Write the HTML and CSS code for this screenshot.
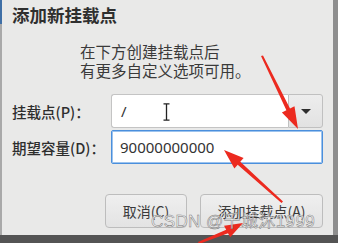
FILE: index.html
```html
<!DOCTYPE html>
<html lang="zh">
<head>
<meta charset="utf-8">
<link rel="stylesheet" href="styles.css">
</head>
<body>
<div class="screen">
  <div class="top">
    <div class="dialog">
      <div class="title">添加新挂载点</div>
      <div class="desc">
        <div>在下方创建挂载点后</div>
        <div>有更多自定义选项可用。</div>
      </div>
      <div class="form">
        <div class="label">挂载点(P)：</div>
        <div class="combo">
          <div class="combo-input">/
            <svg class="ibeam" width="7" height="18" viewBox="0 0 7 18"><path d="M0.5 0.8h6M3.5 0.8v16.4M0.5 17.2h6" stroke="#222" stroke-width="1.3" fill="none"/></svg>
          </div>
          <div class="combo-btn"><span class="tri"></span></div>
        </div>
        <div class="label">期望容量(D)：</div>
        <div class="entry">90000000000</div>
      </div>
      <div class="buttons">
        <div class="btn btn-cancel">取消(C)</div>
        <div class="btn btn-add">添加挂载点(A)</div>
      </div>
    </div>
    <div class="side"></div>
  </div>
  <div class="bottom"></div>
  <svg class="arrows" width="338" height="243" viewBox="0 0 338 243">
    <polygon fill="#ec2a1f" points="261,56 286.4,110.2 281.9,112.4 298,129 294.5,106.2 290,108.4 263,55.5"/>
    <polygon fill="#ec2a1f" points="283,201.5 240.3,161.7 243.6,157.9 224,150 234.4,168.5 237.7,164.7 281.5,203"/>
    <polygon fill="#ec2a1f" points="199,244 228,233.3 230.2,237.2 243,223 224,225.8 226.2,229.7 198,242"/>
  </svg>
  <div class="watermark">CSDN @千城沐1999</div>
</div>
</body>
</html>
```

FILE: styles.css
```css
* { box-sizing: border-box; }
html, body { margin: 0; padding: 0; }
body {
  width: 338px;
  height: 243px;
  overflow: hidden;
  font-family: "Noto Sans CJK SC", "Noto Sans", sans-serif;
  color: #333;
}
.screen {
  position: relative;
  width: 338px;
  height: 243px;
  display: flex;
  flex-direction: column;
  background: #555;
}
.top {
  display: flex;
  height: 235px;
}
.dialog {
  width: 333px;
  background: #e9e9e8;
  border-left: 2px solid #a9a9a9;
  padding: 5px 10px 0 10px;
  display: flex;
  flex-direction: column;
  position: relative;
}
.dialog::before {
  content: "";
  position: absolute;
  left: -2px;
  top: 0;
  width: 2px;
  height: 24px;
  background: #3f6fa6;
}
.side {
  flex: 1;
  background: #8e8e8e;
}
.bottom {
  height: 8px;
  background: #545454;
}
.title {
  font-size: 17.5px;
  line-height: 20px;
  font-weight: 700;
  color: #2f2f2f;
}
.desc {
  margin-top: 17px;
  margin-left: 68px;
  font-size: 15.5px;
  line-height: 19px;
  color: #3a3a3a;
}
.form {
  margin-top: 14px;
  display: grid;
  grid-template-columns: 99px 1fr;
  grid-auto-rows: 34px;
  row-gap: 2px;
  align-items: center;
}
.label {
  font-size: 14.5px;
  font-weight: 500;
  color: #2e2e2e;
  white-space: nowrap;
}
.combo {
  display: flex;
  height: 34px;
}
.combo-input {
  position: relative;
  width: 177px;
  background: #fff;
  border: 1px solid #c4c4c4;
  border-right: none;
  border-radius: 3px 0 0 3px;
  padding-left: 9px;
  font-family: "Noto Sans", sans-serif;
  font-size: 15px;
  line-height: 32px;
  color: #333;
}
.ibeam {
  position: absolute;
  left: 51px;
  top: 8px;
}
.combo-btn {
  flex: 1;
  display: flex;
  align-items: center;
  justify-content: center;
  background: linear-gradient(#ededed, #e2e2e2);
  border: 1px solid #c0c0c0;
  border-radius: 0 3px 3px 0;
}
.tri {
  width: 0;
  height: 0;
  border-left: 5px solid transparent;
  border-right: 5px solid transparent;
  border-top: 5px solid #2e2e2e;
}
.entry {
  height: 34px;
  background: #fff;
  border: 1px solid #4a8fdc;
  box-shadow: inset 0 0 0 1px #9cc3ee;
  border-radius: 2px;
  padding-left: 8px;
  font-family: "Noto Sans", sans-serif;
  font-size: 15px;
  line-height: 32px;
  color: #333;
}
.buttons {
  margin-top: 30px;
  display: flex;
  justify-content: flex-end;
  gap: 13px;
}
.btn {
  height: 34px;
  display: flex;
  align-items: center;
  justify-content: center;
  border: 1px solid #bdbdbd;
  border-radius: 4px;
  background: linear-gradient(#efefef, #e3e3e3);
  font-size: 14px;
  color: #3a3a3a;
}
.btn-cancel { width: 82px; }
.btn-add { width: 123px; }
.arrows {
  position: absolute;
  left: 0;
  top: 0;
}
.watermark {
  position: absolute;
  left: 151px;
  top: 211px;
  font-family: "Liberation Sans", "Noto Sans CJK SC", sans-serif;
  font-size: 17px;
  line-height: 22px;
  letter-spacing: 0.4px;
  color: rgba(255, 255, 255, 0.75);
  -webkit-text-stroke: 0.5px #777;
  white-space: nowrap;
}
```
